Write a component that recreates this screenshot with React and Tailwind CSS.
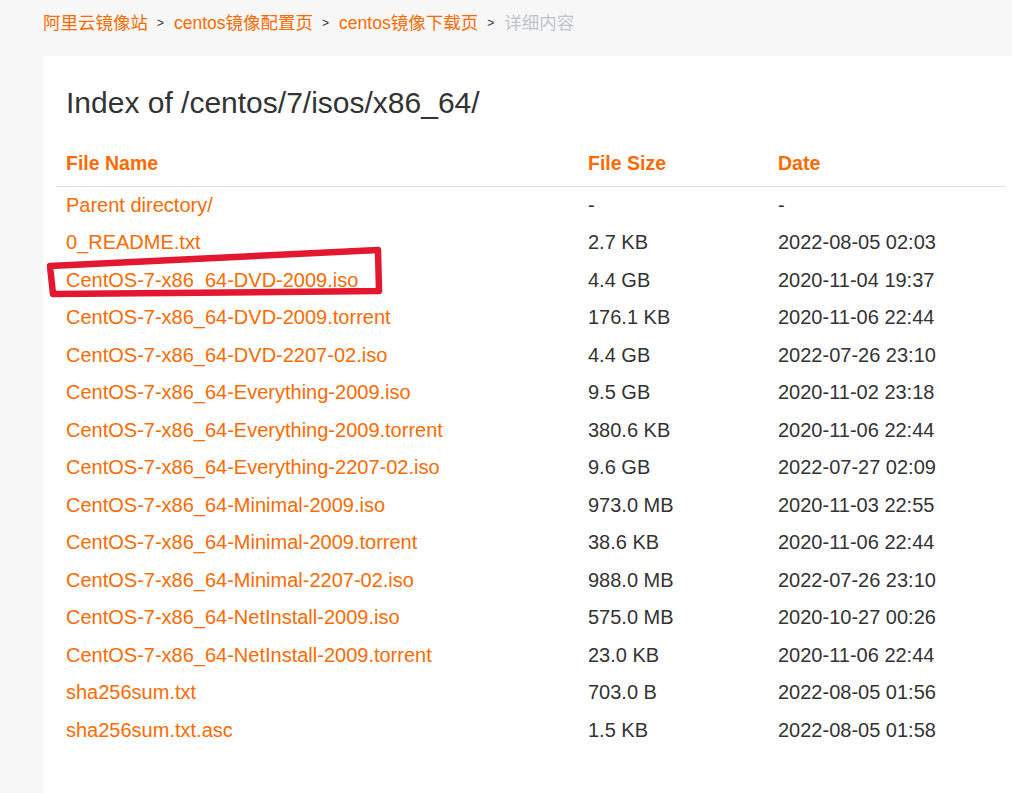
const FILES = [
  { name: 'Parent directory/', size: '-', date: '-' },
  { name: '0_README.txt', size: '2.7 KB', date: '2022-08-05 02:03' },
  { name: 'CentOS-7-x86_64-DVD-2009.iso', size: '4.4 GB', date: '2020-11-04 19:37' },
  { name: 'CentOS-7-x86_64-DVD-2009.torrent', size: '176.1 KB', date: '2020-11-06 22:44' },
  { name: 'CentOS-7-x86_64-DVD-2207-02.iso', size: '4.4 GB', date: '2022-07-26 23:10' },
  { name: 'CentOS-7-x86_64-Everything-2009.iso', size: '9.5 GB', date: '2020-11-02 23:18' },
  { name: 'CentOS-7-x86_64-Everything-2009.torrent', size: '380.6 KB', date: '2020-11-06 22:44' },
  { name: 'CentOS-7-x86_64-Everything-2207-02.iso', size: '9.6 GB', date: '2022-07-27 02:09' },
  { name: 'CentOS-7-x86_64-Minimal-2009.iso', size: '973.0 MB', date: '2020-11-03 22:55' },
  { name: 'CentOS-7-x86_64-Minimal-2009.torrent', size: '38.6 KB', date: '2020-11-06 22:44' },
  { name: 'CentOS-7-x86_64-Minimal-2207-02.iso', size: '988.0 MB', date: '2022-07-26 23:10' },
  { name: 'CentOS-7-x86_64-NetInstall-2009.iso', size: '575.0 MB', date: '2020-10-27 00:26' },
  { name: 'CentOS-7-x86_64-NetInstall-2009.torrent', size: '23.0 KB', date: '2020-11-06 22:44' },
  { name: 'sha256sum.txt', size: '703.0 B', date: '2022-08-05 01:56' },
  { name: 'sha256sum.txt.asc', size: '1.5 KB', date: '2022-08-05 01:58' }
];

const CRUMBS = ['阿里云镜像站', 'centos镜像配置页', 'centos镜像下载页'];

const Breadcrumb = () => (
  <nav className="h-[56px] pl-[43px] pt-[10px] flex items-start text-[17.5px] leading-[26px]">
    {CRUMBS.map((c) => (
      <span key={c} className="flex items-center">
        <a href="#" className="text-[#ff6a00]">{c}</a>
        <span className="ml-[9px] mr-[10px] text-[12px] text-[#333]">&gt;</span>
      </span>
    ))}
    <span className="text-[#c0c4cc]">详细内容</span>
  </nav>
);

const App = () => {
  return (
    <div
      className="min-h-[793px] bg-[#f7f7f7] overflow-hidden"
      style={{ fontFamily: '"Liberation Sans", Arial, "Noto Sans CJK SC", sans-serif' }}
    >
      <Breadcrumb />
      <div className="relative ml-[43px] bg-white min-h-[737px] pt-[29px] pl-[13px]">
        <h1 className="pl-[10px] text-[30px] leading-[36px] text-[#333]">Index of /centos/7/isos/x86_64/</h1>
        <table className="mt-[19px] w-[950px] border-collapse text-left">
          <thead>
            <tr className="h-[46px] border-b border-[#ddd] text-[19.5px] font-bold text-[#ff6a00]">
              <th className="w-[522px] pl-[10px] pt-[2px] font-bold">File Name</th>
              <th className="w-[190px] pl-[10px] pt-[2px] font-bold">File Size</th>
              <th className="pl-[10px] pt-[2px] font-bold">Date</th>
            </tr>
          </thead>
          <tbody className="text-[20px] text-[#333]">
            {FILES.map((f) => (
              <tr key={f.name} className="h-[37.5px]">
                <td className="pl-[10px]">
                  <a href="#" className="text-[#ff6a00]">{f.name}</a>
                </td>
                <td className="pl-[10px]">{f.size}</td>
                <td className="pl-[10px]">{f.date}</td>
              </tr>
            ))}
          </tbody>
        </table>
        <svg
          className="absolute left-[-43px] top-[-56px] pointer-events-none"
          width="420"
          height="320"
          viewBox="0 0 420 320"
        >
          <path
            d="M50 266 L378 250 L379 291 L53 294 Z"
            fill="none"
            stroke="#e3172f"
            strokeWidth="6.5"
            strokeLinejoin="round"
          />
        </svg>
      </div>
    </div>
  );
};

export default App;
